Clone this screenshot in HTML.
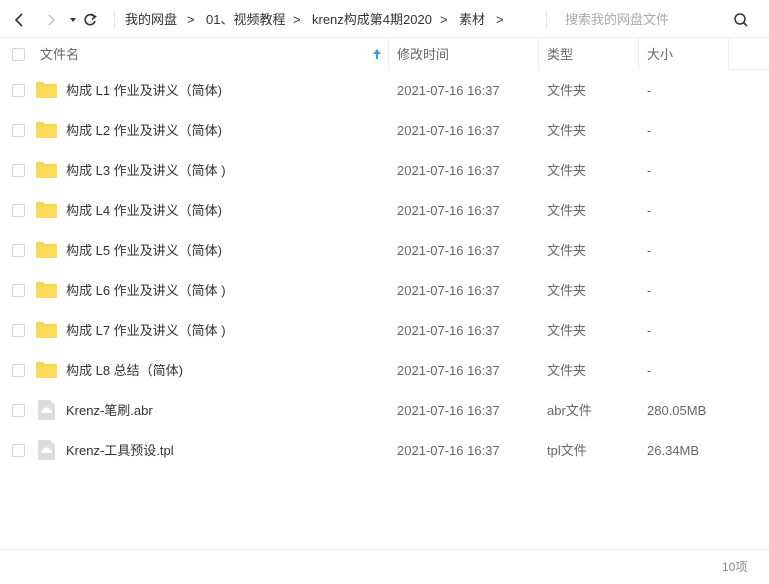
<!DOCTYPE html><html><head><meta charset="utf-8"><style>
*{margin:0;padding:0;box-sizing:border-box}
body{width:769px;height:584px;background:#fff;font-family:"Liberation Sans","Noto Sans CJK SC",sans-serif;font-size:13px;color:#333;position:relative;overflow:hidden}
.a{position:absolute;white-space:nowrap;line-height:16px}
.cb{position:absolute;left:12px;width:13px;height:13px;border:1px solid #d4d4d4;border-radius:2px;background:#fff}
.g{color:#666}
.fold{position:absolute;left:36px;width:21px;height:16px}
</style></head><body>
<svg class="a" style="left:12px;top:11px" width="100" height="18" viewBox="0 0 100 18">
<path d="M10 3 L4 9 L10 15" fill="none" stroke="#333" stroke-width="1.6"/>
<path d="M37 4 L42 9 L37 14" fill="none" stroke="#bbb" stroke-width="1.3"/>
<path d="M58 7 L64 7 L61 11Z" fill="#333"/>
<path d="M82 5.5 A5 5 0 1 0 83 10" fill="none" stroke="#333" stroke-width="1.6"/><path d="M79 3 L83.5 5.5 L80 8.5" fill="none" stroke="#333" stroke-width="1.5"/>
</svg>
<div class="a" style="left:114px;top:10px;width:1px;height:19px;background:#e5e5e5"></div>
<div class="a" style="left:125px;top:12px">我的网盘</div>
<div class="a" style="left:187px;top:12px">&gt;</div>
<div class="a" style="left:206px;top:12px">01、视频教程</div>
<div class="a" style="left:293px;top:12px">&gt;</div>
<div class="a" style="left:312px;top:12px">krenz构成第4期2020</div>
<div class="a" style="left:440px;top:12px">&gt;</div>
<div class="a" style="left:459px;top:12px">素材</div>
<div class="a" style="left:496px;top:12px">&gt;</div>
<div class="a" style="left:546px;top:10px;width:1px;height:19px;background:#e5e5e5"></div>
<div class="a" style="left:565px;top:12px;color:#aaa">搜索我的网盘文件</div>
<svg class="a" style="left:733px;top:12px" width="16" height="16"><circle cx="7" cy="7" r="5" fill="none" stroke="#333" stroke-width="1.5"/><path d="M10.5 10.5 L14 14" stroke="#333" stroke-width="1.6"/></svg>
<div class="a" style="left:0;top:37px;width:769px;height:1px;background:#f0f0f0"></div>
<div class="cb" style="top:48px"></div>
<div class="a g" style="left:40px;top:47px">文件名</div>
<svg class="a" style="left:373px;top:49px" width="8" height="10"><path d="M4 0 L8 5 L5 5 L5 10 L3 10 L3 5 L0 5Z" fill="#3c9be8"/></svg>
<div class="a" style="left:388px;top:38px;width:1px;height:32px;background:#eee"></div>
<div class="a g" style="left:397px;top:47px">修改时间</div>
<div class="a" style="left:538px;top:38px;width:1px;height:32px;background:#eee"></div>
<div class="a g" style="left:547px;top:47px">类型</div>
<div class="a" style="left:638px;top:38px;width:1px;height:32px;background:#eee"></div>
<div class="a g" style="left:647px;top:47px">大小</div>
<div class="a" style="left:728px;top:38px;width:41px;height:32px;border-left:1px solid #eee;border-bottom:1px solid #eee"></div>
<div id="rows"></div>
<div class="a" style="left:0;top:549px;width:769px;height:1px;background:#eee"></div>
<div class="a" style="left:722px;top:559px;color:#888;font-size:12px">10项</div>
<script>
var names=["构成 L1 作业及讲义（简体)","构成 L2 作业及讲义（简体)","构成 L3 作业及讲义（简体 )","构成 L4 作业及讲义（简体)","构成 L5 作业及讲义（简体)","构成 L6 作业及讲义（简体 )","构成 L7 作业及讲义（简体 )","构成 L8 总结（简体)","Krenz-笔刷.abr","Krenz-工具预设.tpl"];
var types=["文件夹","文件夹","文件夹","文件夹","文件夹","文件夹","文件夹","文件夹","abr文件","tpl文件"];
var sizes=["-","-","-","-","-","-","-","-","280.05MB","26.34MB"];
var h="";
for(var i=0;i<10;i++){var y=90+40*i;
h+='<div class="cb" style="top:'+(y-6)+'px"></div>';
if(i<8)h+='<svg class="fold" style="top:'+(y-8)+'px" viewBox="0 0 21 16"><path d="M0 1.5 Q0 0 1.5 0 L7 0 L9 2 L19.5 2 Q21 2 21 3.5 L21 14.5 Q21 16 19.5 16 L1.5 16 Q0 16 0 14.5Z" fill="#f9d44e"/><rect x="0" y="4" width="21" height="12" rx="1.5" fill="#fcdc5c"/></svg>';
else h+='<svg class="a" style="left:38px;top:'+(y-10)+'px" width="17" height="20" viewBox="0 0 17 20"><path d="M0 1 Q0 0 1 0 L12 0 L17 5 L17 19 Q17 20 16 20 L1 20 Q0 20 0 19Z" fill="#dcdcdc"/><path d="M4 13 Q3 13 3 11.5 Q3 10 5 10 Q5.5 7.5 8.5 7.5 Q11.5 7.5 12 10 Q14 10 14 11.5 Q14 13 13 13Z" fill="#fff"/></svg>';
h+='<div class="a" style="left:66px;top:'+(y-7)+'px">'+names[i]+'</div>';
h+='<div class="a g" style="left:397px;top:'+(y-7)+'px">2021-07-16 16:37</div>';
h+='<div class="a g" style="left:547px;top:'+(y-7)+'px">'+types[i]+'</div>';
h+='<div class="a g" style="left:647px;top:'+(y-7)+'px">'+sizes[i]+'</div>';}
document.getElementById("rows").innerHTML=h;
</script>
</body></html>
